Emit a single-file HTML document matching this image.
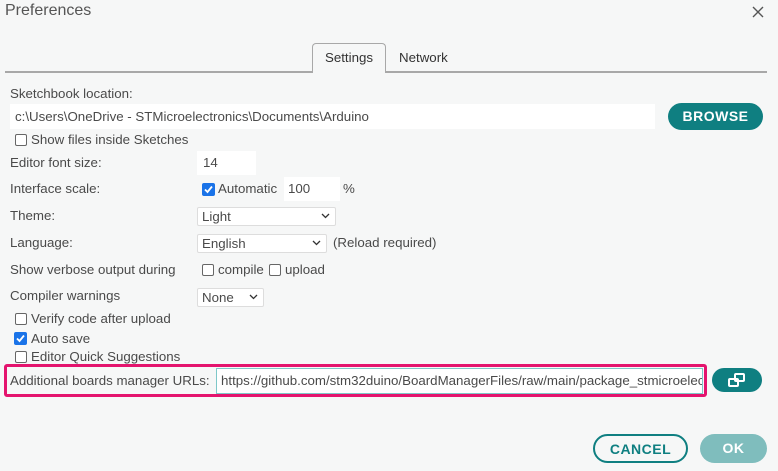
<!DOCTYPE html>
<html><head><style>
*{box-sizing:border-box;margin:0;padding:0}
body{width:778px;height:471px;background:#f6f7f7;font-family:"Liberation Sans",Arial,sans-serif;font-size:13.3px;color:#4a4a4a;position:relative;overflow:hidden}
.a{position:absolute;white-space:nowrap}
.t{line-height:16px}
.in{position:absolute;background:#fff;padding-left:6px;line-height:22px;color:#4a4a4a}
.cb{position:absolute;width:12px;height:12px;border:1px solid #666;border-radius:2px;background:#fff}
.cbc{position:absolute;width:13px;height:13px;border-radius:2px;background:#1a73e8}
.sel{position:absolute;background:#fff;border:1px solid #ddd;border-radius:2px;padding-left:4px;line-height:17px}
.sel svg{position:absolute;right:5px;top:5px}
.btn{position:absolute;border-radius:15px;font-weight:bold;text-align:center;font-size:14px;letter-spacing:.5px}
</style></head><body>
<div class="a t" style="left:5px;top:3px;font-size:16px;color:#555">Preferences</div>
<svg class="a" style="left:752px;top:6px" width="12" height="12"><path d="M1 1L11 11M11 1L1 11" stroke="#555" stroke-width="1.4"/></svg>
<div class="a" style="left:5px;top:71px;width:762px;height:2px;background:#a8a8a8"></div>
<div class="a" style="left:312px;top:43px;width:74px;height:30px;border:1px solid #a8a8a8;border-bottom:none;border-radius:4px 4px 0 0;background:#f6f7f7;text-align:center;line-height:28px;color:#333">Settings</div>
<div class="a t" style="left:399px;top:50px;color:#333">Network</div>

<div class="a t" style="left:10px;top:86px">Sketchbook location:</div>
<div class="in" style="left:10px;top:104px;width:645px;height:25px;line-height:25px;padding-left:5px">c:\Users\OneDrive - STMicroelectronics\Documents\Arduino</div>
<div class="btn" style="left:668px;top:103px;width:95px;height:27px;line-height:27px;background:#0f7f81;color:#fff">BROWSE</div>

<div class="cb" style="left:15px;top:134px"></div>
<div class="a t" style="left:31px;top:132px">Show files inside Sketches</div>

<div class="a t" style="left:10px;top:155px">Editor font size:</div>
<div class="in" style="left:197px;top:151px;width:59px;height:24px;line-height:24px;padding-left:6px">14</div>

<div class="a t" style="left:10px;top:181px">Interface scale:</div>
<div class="cbc" style="left:202px;top:183px"></div>
<svg class="a" style="left:202px;top:183px" width="13" height="13"><path d="M3 6.5L5.5 9L10 3.5" stroke="#fff" stroke-width="1.8" fill="none"/></svg>
<div class="a t" style="left:218px;top:181px">Automatic</div>
<div class="in" style="left:284px;top:177px;width:56px;height:24px;line-height:24px;padding-left:4px">100</div>
<div class="a t" style="left:343px;top:181px">%</div>

<div class="a t" style="left:10px;top:208px">Theme:</div>
<div class="sel" style="left:197px;top:207px;width:139px;height:19px">Light<svg width="9" height="6"><path d="M1 1L4.5 4.5L8 1" stroke="#333" stroke-width="1.3" fill="none"/></svg></div>

<div class="a t" style="left:10px;top:235px">Language:</div>
<div class="sel" style="left:197px;top:234px;width:130px;height:19px">English<svg width="9" height="6"><path d="M1 1L4.5 4.5L8 1" stroke="#333" stroke-width="1.3" fill="none"/></svg></div>
<div class="a t" style="left:333px;top:235px">(Reload required)</div>

<div class="a t" style="left:10px;top:262px">Show verbose output during</div>
<div class="cb" style="left:202px;top:264px"></div>
<div class="a t" style="left:218px;top:262px">compile</div>
<div class="cb" style="left:269px;top:264px"></div>
<div class="a t" style="left:285px;top:262px">upload</div>

<div class="a t" style="left:10px;top:288px">Compiler warnings</div>
<div class="sel" style="left:197px;top:288px;width:67px;height:19px">None<svg width="9" height="6"><path d="M1 1L4.5 4.5L8 1" stroke="#333" stroke-width="1.3" fill="none"/></svg></div>

<div class="cb" style="left:15px;top:313px"></div>
<div class="a t" style="left:31px;top:311px">Verify code after upload</div>
<div class="cbc" style="left:14px;top:332px"></div>
<svg class="a" style="left:14px;top:332px" width="13" height="13"><path d="M3 6.5L5.5 9L10 3.5" stroke="#fff" stroke-width="1.8" fill="none"/></svg>
<div class="a t" style="left:31px;top:331px">Auto save</div>
<div class="cb" style="left:15px;top:351px"></div>
<div class="a t" style="left:31px;top:349px">Editor Quick Suggestions</div>

<div class="a" style="left:4px;top:364px;width:703px;height:33px;border:3px solid #e4146e;border-radius:3px"></div>
<div class="a t" style="left:10px;top:373px">Additional boards manager URLs:</div>
<div class="in" style="left:216px;top:368px;width:487px;height:26px;border:1px solid #7ec8c9;line-height:24px;padding-left:4px;overflow:hidden">https://github.com/stm32duino/BoardManagerFiles/raw/main/package_stmicroelectronics_index.json</div>
<div class="btn" style="left:712px;top:368px;width:50px;height:24px;background:#0f7f81"></div>
<svg class="a" style="left:728px;top:373px" width="18" height="14"><rect x="7" y="1" width="9" height="7" rx="1" fill="none" stroke="#fff" stroke-width="2"/><rect x="1" y="6" width="9" height="7" rx="1" fill="none" stroke="#fff" stroke-width="2"/></svg>

<div class="btn" style="left:593px;top:434px;width:95px;height:29px;line-height:26px;border:2px solid #0f7f81;color:#0f7f81;background:#f6f7f7">CANCEL</div>
<div class="btn" style="left:700px;top:434px;width:67px;height:29px;line-height:29px;background:#7fbdbd;color:#fff">OK</div>
</body></html>
